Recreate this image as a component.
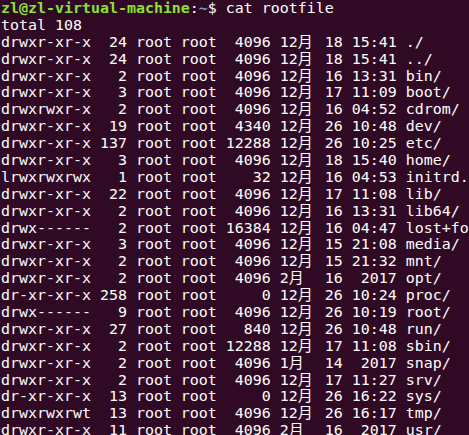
import React from 'react';

const rows = [
  'drwxr-xr-x  24 root root  4096 12月 18 15:41 ./',
  'drwxr-xr-x  24 root root  4096 12月 18 15:41 ../',
  'drwxr-xr-x   2 root root  4096 12月 16 13:31 bin/',
  'drwxr-xr-x   3 root root  4096 12月 17 11:09 boot/',
  'drwxrwxr-x   2 root root  4096 12月 16 04:52 cdrom/',
  'drwxr-xr-x  19 root root  4340 12月 26 10:48 dev/',
  'drwxr-xr-x 137 root root 12288 12月 26 10:25 etc/',
  'drwxr-xr-x   3 root root  4096 12月 18 15:40 home/',
  'lrwxrwxrwx   1 root root    32 12月 16 04:53 initrd.img',
  'drwxr-xr-x  22 root root  4096 12月 17 11:08 lib/',
  'drwxr-xr-x   2 root root  4096 12月 16 13:31 lib64/',
  'drwx------   2 root root 16384 12月 16 04:47 lost+found/',
  'drwxr-xr-x   3 root root  4096 12月 15 21:08 media/',
  'drwxr-xr-x   2 root root  4096 12月 15 21:32 mnt/',
  'drwxr-xr-x   2 root root  4096 2月  16  2017 opt/',
  'dr-xr-xr-x 258 root root     0 12月 26 10:24 proc/',
  'drwx------   9 root root  4096 12月 26 10:19 root/',
  'drwxr-xr-x  27 root root   840 12月 26 10:48 run/',
  'drwxr-xr-x   2 root root 12288 12月 17 11:08 sbin/',
  'drwxr-xr-x   2 root root  4096 1月  14  2017 snap/',
  'drwxr-xr-x   2 root root  4096 12月 17 11:27 srv/',
  'dr-xr-xr-x  13 root root     0 12月 26 16:22 sys/',
  'drwxrwxrwt  13 root root  4096 12月 26 16:17 tmp/',
  'drwxr-xr-x  11 root root  4096 2月  16  2017 usr/',
];

// 月 is a double-width cell in the terminal grid
const Line = ({ text }: { text: string }) => {
  const parts = text.split('月');
  return (
    <div className="whitespace-pre h-[16.9px]">
      {parts.map((p, i) => (
        <React.Fragment key={i}>
          {p}
          {i < parts.length - 1 && (
            <span className="inline-block w-[18px] text-[15px]" style={{}}>
              月
            </span>
          )}
        </React.Fragment>
      ))}
    </div>
  );
};

export default function App() {
  return (
    <div
      className="w-[469px] h-[435px] overflow-hidden bg-[#300a24] text-white pl-[1px] pt-[0px] text-[14.95px] leading-[16.9px]"
      style={{ fontFamily: '"DejaVu Sans Mono", "Noto Sans CJK SC", monospace' }}
    >
      <div className="whitespace-pre h-[16.9px]">
        <span className="font-bold text-[#8ae234]">zl@zl-virtual-machine</span>
        <span>:</span>
        <span className="font-bold text-[#729fcf]">~</span>
        <span>$ cat rootfile</span>
      </div>
      <div className="whitespace-pre h-[16.9px]">total 108</div>
      {rows.map((r, i) => (
        <Line key={i} text={r} />
      ))}
    </div>
  );
}
